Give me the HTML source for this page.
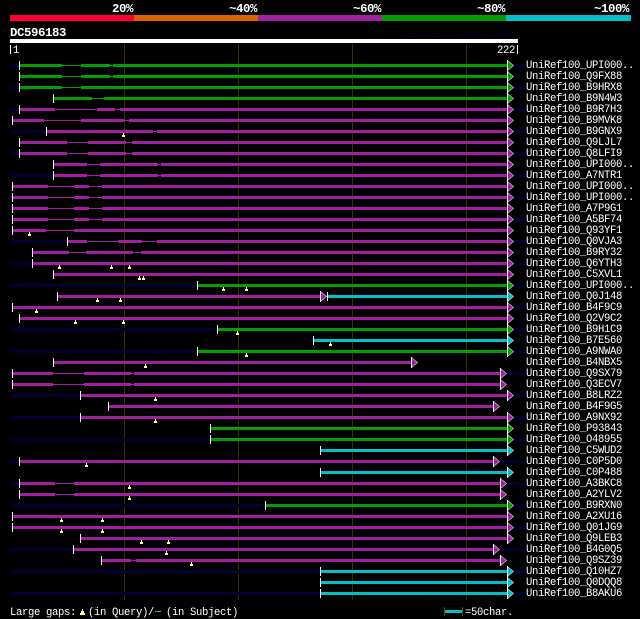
<!DOCTYPE html>
<html><head><meta charset="utf-8"><style>
html,body{margin:0;padding:0;background:#000;width:640px;height:619px;overflow:hidden}
svg{display:block;font-family:"Liberation Mono",monospace;font-size:10.6px;letter-spacing:-.36px}
text{fill:#fff}
.h{font-size:12.4px;font-weight:bold;letter-spacing:-.44px}
.g{fill:#00a000}.p{fill:#a0209f}.c{fill:#00c0c8}.d{fill:#000033}
path,rect{shape-rendering:crispEdges}
polygon{stroke:#fff;stroke-width:.7;stroke-opacity:.75}
</style></head><body>
<svg width="640" height="619" viewBox="0 0 640 619" xmlns="http://www.w3.org/2000/svg">
<defs>
<rect id="t" x="0" y="-3" width="1" height="9" fill="#fff"/>
<path id="m" d="M1 3h1v2h-1zM0 5h3v2h-3z" fill="#ffff99"/>
<g id="ag"><polygon points="0.5,-3.5 6.5,1.5 0.5,6.5" fill="#00a000"/><rect x="0" y="-4" width="1" height="11" fill="#fff"/></g>
<g id="ap"><polygon points="0.5,-3.5 6.5,1.5 0.5,6.5" fill="#a0209f"/><rect x="0" y="-4" width="1" height="11" fill="#fff"/></g>
<g id="ac"><polygon points="0.5,-3.5 6.5,1.5 0.5,6.5" fill="#00c0c8"/><rect x="0" y="-4" width="1" height="11" fill="#fff"/></g>
</defs>
<rect x="10" y="15" width="124" height="6" fill="#ff0033"/>
<rect x="134" y="15" width="124" height="6" fill="#e06000"/>
<rect x="258" y="15" width="124" height="6" fill="#a0209f"/>
<rect x="382" y="15" width="124" height="6" fill="#00a000"/>
<rect x="506" y="15" width="125" height="6" fill="#00c0c8"/>
<text class="h" x="112" y="12">20%</text>
<text class="h" x="229" y="12">~40%</text>
<text class="h" x="353" y="12">~60%</text>
<text class="h" x="477" y="12">~80%</text>
<text class="h" x="594" y="12">~100%</text>
<text class="h" x="10" y="36">DC596183</text>
<text x="401" y="37" style="fill:#000033;font-size:8.33px;letter-spacing:0">AlignView.pm Beta rel.7</text>
<rect x="10" y="39" width="508" height="4" fill="#fff"/>
<rect x="10" y="45" width="1" height="9" fill="#fff"/>
<text x="13" y="53">1</text>
<text x="497" y="53">222</text>
<rect x="517" y="45" width="1" height="9" fill="#fff"/>
<path d="M124 44h1v556h-1zM238 44h1v556h-1zM352 44h1v556h-1zM466 44h1v556h-1z" fill="#333300"/>
<path class="d" d="M10 64H19v3H10zM514 64H526v3H514zM10 86H19v3H10zM514 86H526v3H514zM10 108H19v3H10zM514 108H526v3H514zM10 130H46v3H10zM514 130H526v3H514zM10 152H19v3H10zM514 152H526v3H514zM10 174H53v3H10zM514 174H526v3H514zM10 196H12v3H10zM514 196H526v3H514zM10 218H12v3H10zM514 218H526v3H514zM10 240H67v3H10zM514 240H526v3H514zM10 262H32v3H10zM514 262H526v3H514zM10 284H197v3H10zM514 284H526v3H514zM10 306H12v3H10zM514 306H526v3H514zM10 328H217v3H10zM514 328H526v3H514zM10 350H197v3H10zM514 350H526v3H514zM10 372H12v3H10zM507 372H526v3H507zM10 394H80v3H10zM514 394H526v3H514zM10 416H80v3H10zM514 416H526v3H514zM10 438H210v3H10zM514 438H526v3H514zM10 460H19v3H10zM500 460H526v3H500zM10 482H19v3H10zM507 482H526v3H507zM10 504H265v3H10zM514 504H526v3H514zM10 526H12v3H10zM514 526H526v3H514zM10 548H73v3H10zM500 548H526v3H500zM10 570H320v3H10zM514 570H526v3H514zM10 592H320v3H10zM514 592H526v3H514z"/>

<g transform="translate(0,64)"><path class="g" d="M20 0H62V3H20zM62 1H81V2H62zM81 0H110V3H81zM110 1H113V2H110zM113 0H507V3H113z"/><use href="#t" x="19"/><use href="#ag" x="507"/></g>
<g transform="translate(0,75)"><path class="g" d="M20 0H62V3H20zM62 1H81V2H62zM81 0H110V3H81zM110 1H113V2H110zM113 0H507V3H113z"/><use href="#t" x="19"/><use href="#ag" x="507"/></g>
<g transform="translate(0,86)"><path class="g" d="M20 0H62V3H20zM62 1H81V2H62zM81 0H507V3H81z"/><use href="#t" x="19"/><use href="#ag" x="507"/></g>
<g transform="translate(0,97)"><path class="g" d="M54 0H92V3H54zM92 1H104V2H92zM104 0H507V3H104z"/><use href="#t" x="53"/><use href="#ag" x="507"/></g>
<g transform="translate(0,108)"><path class="p" d="M20 0H55V3H20zM55 1H97V2H55zM97 0H115V3H97zM115 1H120V2H115zM120 0H507V3H120z"/><use href="#t" x="19"/><use href="#ap" x="507"/></g>
<g transform="translate(0,119)"><path class="p" d="M13 0H44V3H13zM44 1H81V2H44zM81 0H124V3H81zM124 1H129V2H124zM129 0H507V3H129z"/><use href="#t" x="12"/><use href="#ap" x="507"/></g>
<g transform="translate(0,130)"><path class="p" d="M47 0H153V3H47zM153 1H157V2H153zM157 0H507V3H157z"/><use href="#t" x="46"/><use href="#ap" x="507"/><use href="#m" x="122"/></g>
<g transform="translate(0,141)"><path class="p" d="M20 0H67V3H20zM67 1H88V2H67zM88 0H126V3H88zM126 1H132V2H126zM132 0H507V3H132z"/><use href="#t" x="19"/><use href="#ap" x="507"/></g>
<g transform="translate(0,152)"><path class="p" d="M20 0H67V3H20zM67 1H88V2H67zM88 0H126V3H88zM126 1H132V2H126zM132 0H507V3H132z"/><use href="#t" x="19"/><use href="#ap" x="507"/></g>
<g transform="translate(0,163)"><path class="p" d="M54 0H87V3H54zM87 1H100V2H87zM100 0H158V3H100zM158 1H161V2H158zM161 0H507V3H161z"/><use href="#t" x="53"/><use href="#ap" x="507"/></g>
<g transform="translate(0,174)"><path class="p" d="M54 0H87V3H54zM87 1H100V2H87zM100 0H158V3H100zM158 1H161V2H158zM161 0H507V3H161z"/><use href="#t" x="53"/><use href="#ap" x="507"/></g>
<g transform="translate(0,185)"><path class="p" d="M13 0H48V3H13zM48 1H74V2H48zM74 0H89V3H74zM89 1H102V2H89zM102 0H507V3H102z"/><use href="#t" x="12"/><use href="#ap" x="507"/></g>
<g transform="translate(0,196)"><path class="p" d="M13 0H48V3H13zM48 1H74V2H48zM74 0H89V3H74zM89 1H102V2H89zM102 0H507V3H102z"/><use href="#t" x="12"/><use href="#ap" x="507"/></g>
<g transform="translate(0,207)"><path class="p" d="M13 0H48V3H13zM48 1H74V2H48zM74 0H89V3H74zM89 1H102V2H89zM102 0H507V3H102z"/><use href="#t" x="12"/><use href="#ap" x="507"/></g>
<g transform="translate(0,218)"><path class="p" d="M13 0H48V3H13zM48 1H74V2H48zM74 0H89V3H74zM89 1H102V2H89zM102 0H507V3H102z"/><use href="#t" x="12"/><use href="#ap" x="507"/></g>
<g transform="translate(0,229)"><path class="p" d="M13 0H46V3H13zM46 1H74V2H46zM74 0H507V3H74z"/><use href="#t" x="12"/><use href="#ap" x="507"/><use href="#m" x="28"/></g>
<g transform="translate(0,240)"><path class="p" d="M68 0H87V3H68zM87 1H118V2H87zM118 0H142V3H118zM142 1H157V2H142zM157 0H507V3H157z"/><use href="#t" x="67"/><use href="#ap" x="507"/></g>
<g transform="translate(0,251)"><path class="p" d="M33 0H69V3H33zM69 1H86V2H69zM86 0H133V3H86zM133 1H141V2H133zM141 0H507V3H141z"/><use href="#t" x="32"/><use href="#ap" x="507"/></g>
<g transform="translate(0,262)"><path class="p" d="M33 0H507V3H33z"/><use href="#t" x="32"/><use href="#ap" x="507"/><use href="#m" x="58"/><use href="#m" x="110"/><use href="#m" x="128"/></g>
<g transform="translate(0,273)"><path class="p" d="M54 0H507V3H54z"/><use href="#t" x="53"/><use href="#ap" x="507"/><use href="#m" x="138"/><use href="#m" x="142"/></g>
<g transform="translate(0,284)"><path class="g" d="M198 0H507V3H198z"/><use href="#t" x="197"/><use href="#ag" x="507"/><use href="#m" x="222"/><use href="#m" x="245"/></g>
<g transform="translate(0,295)"><path class="p" d="M58 0H320V3H58z"/><path class="c" d="M328 0H507V3H328z"/><use href="#t" x="57"/><use href="#t" x="327"/><use href="#ap" x="320"/><use href="#ac" x="507"/><use href="#m" x="96"/><use href="#m" x="119"/></g>
<g transform="translate(0,306)"><path class="p" d="M13 0H507V3H13z"/><use href="#t" x="12"/><use href="#ap" x="507"/><use href="#m" x="35"/></g>
<g transform="translate(0,317)"><path class="p" d="M20 0H507V3H20z"/><use href="#t" x="19"/><use href="#ap" x="507"/><use href="#m" x="74"/><use href="#m" x="122"/></g>
<g transform="translate(0,328)"><path class="g" d="M218 0H507V3H218z"/><use href="#t" x="217"/><use href="#ag" x="507"/><use href="#m" x="236"/></g>
<g transform="translate(0,339)"><path class="c" d="M314 0H507V3H314z"/><use href="#t" x="313"/><use href="#ac" x="507"/><use href="#m" x="329"/></g>
<g transform="translate(0,350)"><path class="g" d="M198 0H507V3H198z"/><use href="#t" x="197"/><use href="#ag" x="507"/><use href="#m" x="245"/></g>
<g transform="translate(0,361)"><path class="p" d="M54 0H411V3H54z"/><use href="#t" x="53"/><use href="#ap" x="411"/><use href="#m" x="144"/></g>
<g transform="translate(0,372)"><path class="p" d="M13 0H53V3H13zM53 1H84V2H53zM84 0H131V3H84zM131 1H134V2H131zM134 0H500V3H134z"/><use href="#t" x="12"/><use href="#ap" x="500"/></g>
<g transform="translate(0,383)"><path class="p" d="M13 0H53V3H13zM53 1H84V2H53zM84 0H131V3H84zM131 1H134V2H131zM134 0H500V3H134z"/><use href="#t" x="12"/><use href="#ap" x="500"/></g>
<g transform="translate(0,394)"><path class="p" d="M81 0H507V3H81z"/><use href="#t" x="80"/><use href="#ap" x="507"/><use href="#m" x="154"/></g>
<g transform="translate(0,405)"><path class="p" d="M109 0H493V3H109z"/><use href="#t" x="108"/><use href="#ap" x="493"/></g>
<g transform="translate(0,416)"><path class="p" d="M81 0H507V3H81z"/><use href="#t" x="80"/><use href="#ap" x="507"/><use href="#m" x="154"/></g>
<g transform="translate(0,427)"><path class="g" d="M211 0H507V3H211z"/><use href="#t" x="210"/><use href="#ag" x="507"/></g>
<g transform="translate(0,438)"><path class="g" d="M211 0H507V3H211z"/><use href="#t" x="210"/><use href="#ag" x="507"/></g>
<g transform="translate(0,449)"><path class="c" d="M321 0H507V3H321z"/><use href="#t" x="320"/><use href="#ac" x="507"/></g>
<g transform="translate(0,460)"><path class="p" d="M20 0H493V3H20z"/><use href="#t" x="19"/><use href="#ap" x="493"/><use href="#m" x="85"/></g>
<g transform="translate(0,471)"><path class="c" d="M321 0H507V3H321z"/><use href="#t" x="320"/><use href="#ac" x="507"/></g>
<g transform="translate(0,482)"><path class="p" d="M20 0H55V3H20zM55 1H74V2H55zM74 0H500V3H74z"/><use href="#t" x="19"/><use href="#ap" x="500"/><use href="#m" x="128"/></g>
<g transform="translate(0,493)"><path class="p" d="M20 0H55V3H20zM55 1H74V2H55zM74 0H500V3H74z"/><use href="#t" x="19"/><use href="#ap" x="500"/><use href="#m" x="128"/></g>
<g transform="translate(0,504)"><path class="g" d="M266 0H507V3H266z"/><use href="#t" x="265"/><use href="#ag" x="507"/></g>
<g transform="translate(0,515)"><path class="p" d="M13 0H507V3H13z"/><use href="#t" x="12"/><use href="#ap" x="507"/><use href="#m" x="60"/><use href="#m" x="101"/></g>
<g transform="translate(0,526)"><path class="p" d="M13 0H507V3H13z"/><use href="#t" x="12"/><use href="#ap" x="507"/><use href="#m" x="60"/><use href="#m" x="101"/></g>
<g transform="translate(0,537)"><path class="p" d="M81 0H507V3H81z"/><use href="#t" x="80"/><use href="#ap" x="507"/><use href="#m" x="140"/><use href="#m" x="167"/></g>
<g transform="translate(0,548)"><path class="p" d="M74 0H493V3H74z"/><use href="#t" x="73"/><use href="#ap" x="493"/><use href="#m" x="165"/></g>
<g transform="translate(0,559)"><path class="p" d="M102 0H131V3H102zM131 1H136V2H131zM136 0H500V3H136z"/><use href="#t" x="101"/><use href="#ap" x="500"/><use href="#m" x="190"/></g>
<g transform="translate(0,570)"><path class="c" d="M321 0H507V3H321z"/><use href="#t" x="320"/><use href="#ac" x="507"/></g>
<g transform="translate(0,581)"><path class="c" d="M321 0H507V3H321z"/><use href="#t" x="320"/><use href="#ac" x="507"/></g>
<g transform="translate(0,592)"><path class="c" d="M321 0H507V3H321z"/><use href="#t" x="320"/><use href="#ac" x="507"/></g>

<g transform="translate(0,1)">
<text x="526" y="67">UniRef100_UPI000..</text>
<text x="526" y="78">UniRef100_Q9FX88</text>
<text x="526" y="89">UniRef100_B9HRX8</text>
<text x="526" y="100">UniRef100_B9N4W3</text>
<text x="526" y="111">UniRef100_B9R7H3</text>
<text x="526" y="122">UniRef100_B9MVK8</text>
<text x="526" y="133">UniRef100_B9GNX9</text>
<text x="526" y="144">UniRef100_Q9LJL7</text>
<text x="526" y="155">UniRef100_Q8LFI9</text>
<text x="526" y="166">UniRef100_UPI000..</text>
<text x="526" y="177">UniRef100_A7NTR1</text>
<text x="526" y="188">UniRef100_UPI000..</text>
<text x="526" y="199">UniRef100_UPI000..</text>
<text x="526" y="210">UniRef100_A7P9G1</text>
<text x="526" y="221">UniRef100_A5BF74</text>
<text x="526" y="232">UniRef100_Q93YF1</text>
<text x="526" y="243">UniRef100_Q0VJA3</text>
<text x="526" y="254">UniRef100_B9RY32</text>
<text x="526" y="265">UniRef100_Q6YTH3</text>
<text x="526" y="276">UniRef100_C5XVL1</text>
<text x="526" y="287">UniRef100_UPI000..</text>
<text x="526" y="298">UniRef100_Q0J148</text>
<text x="526" y="309">UniRef100_B4F9C9</text>
<text x="526" y="320">UniRef100_Q2V9C2</text>
<text x="526" y="331">UniRef100_B9H1C9</text>
<text x="526" y="342">UniRef100_B7E560</text>
<text x="526" y="353">UniRef100_A9NWA0</text>
<text x="526" y="364">UniRef100_B4NBX5</text>
<text x="526" y="375">UniRef100_Q9SX79</text>
<text x="526" y="386">UniRef100_Q3ECV7</text>
<text x="526" y="397">UniRef100_B8LRZ2</text>
<text x="526" y="408">UniRef100_B4F9G5</text>
<text x="526" y="419">UniRef100_A9NX92</text>
<text x="526" y="430">UniRef100_P93843</text>
<text x="526" y="441">UniRef100_O48955</text>
<text x="526" y="452">UniRef100_C5WUD2</text>
<text x="526" y="463">UniRef100_C0P5D0</text>
<text x="526" y="474">UniRef100_C0P488</text>
<text x="526" y="485">UniRef100_A3BKC8</text>
<text x="526" y="496">UniRef100_A2YLV2</text>
<text x="526" y="507">UniRef100_B9RXN0</text>
<text x="526" y="518">UniRef100_A2XU16</text>
<text x="526" y="529">UniRef100_Q01JG9</text>
<text x="526" y="540">UniRef100_Q9LEB3</text>
<text x="526" y="551">UniRef100_B4G0Q5</text>
<text x="526" y="562">UniRef100_Q9SZ39</text>
<text x="526" y="573">UniRef100_Q10HZ7</text>
<text x="526" y="584">UniRef100_Q0DQQ8</text>
<text x="526" y="595">UniRef100_B8AKU6</text>
</g>

<text x="10" y="615">Large gaps:</text>
<path d="M82 609h1v2h-1zM81 611h3v2h-3zM80 613h5v2h-5z" fill="#ffff99"/>
<text x="88" y="615">(in Query)/</text>
<rect x="155" y="611" width="6" height="1" fill="#00c0c8"/>
<text x="166" y="615">(in Subject)</text>
<path d="M444 607h1v9h-1zM462 607h1v9h-1z" fill="#555500"/>
<rect x="445" y="610" width="17" height="3" fill="#00c0c8"/>
<text x="465" y="615">=50char.</text>
</svg>
</body></html>
